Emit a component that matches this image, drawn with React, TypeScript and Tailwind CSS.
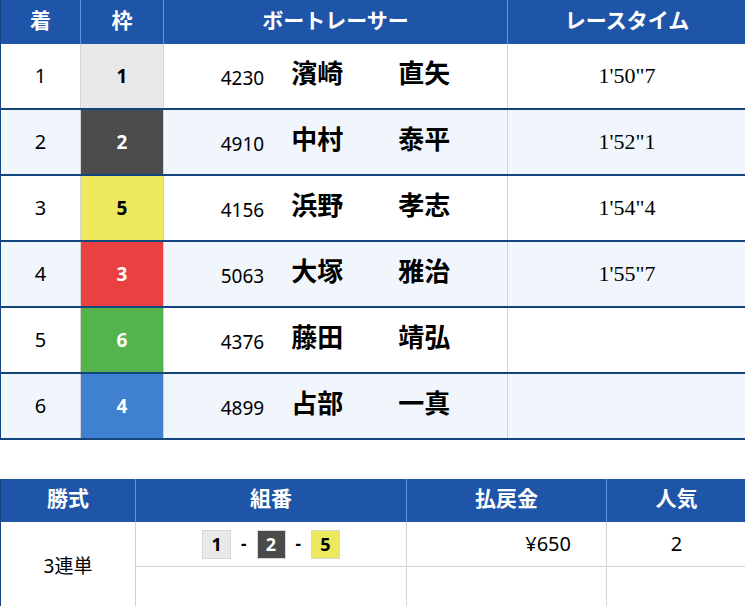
import React from "react";

const frameColors: Record<number, string> = {
  1: "bg-[#e9e9e9] text-black",
  2: "bg-[#4b4b4b] text-white",
  3: "bg-[#e94141] text-white",
  4: "bg-[#3f80d0] text-white",
  5: "bg-[#ece95f] text-black",
  6: "bg-[#54b44b] text-white",
};

const rows = [
  { rank: "1", frame: 1, reg: "4230", sur: "濱崎", given: "直矢", time: "1'50\"7" },
  { rank: "2", frame: 2, reg: "4910", sur: "中村", given: "泰平", time: "1'52\"1" },
  { rank: "3", frame: 5, reg: "4156", sur: "浜野", given: "孝志", time: "1'54\"4" },
  { rank: "4", frame: 3, reg: "5063", sur: "大塚", given: "雅治", time: "1'55\"7" },
  { rank: "5", frame: 6, reg: "4376", sur: "藤田", given: "靖弘", time: "" },
  { rank: "6", frame: 4, reg: "4899", sur: "占部", given: "一真", time: "" },
];

const jp = { fontFamily: '"Noto Sans", "Noto Sans CJK JP", sans-serif' };

const headerBg = "bg-[#1f55a8]";

function HeadCell({ children, last }: { children: React.ReactNode; last?: boolean }) {
  return (
    <div
      className={`flex items-center justify-center pb-[3px] text-white font-bold text-[21px] ${
        last ? "" : "border-r border-[#5f93dc]"
      }`}
    >
      {children}
    </div>
  );
}

function Badge({ n }: { n: number }) {
  return (
    <span
      className={`inline-flex w-[29px] h-[29px] items-center justify-center font-bold text-[18px] border border-[#d6d6d6] ${frameColors[n]}`}
    >
      {n}
    </span>
  );
}

export default function App() {
  return (
    <div className="w-[745px] h-[606px] overflow-hidden bg-white" style={jp}>
      {/* Result table */}
      <div className="border-l border-[#13467f]">
        <div className={`grid grid-cols-[80px_83px_344px_238px] h-[44px] ${headerBg}`}>
          <HeadCell>着</HeadCell>
          <HeadCell>枠</HeadCell>
          <HeadCell>ボートレーサー</HeadCell>
          <HeadCell last>レースタイム</HeadCell>
        </div>
        {rows.map((r, i) => (
          <div
            key={r.rank}
            className={`grid grid-cols-[80px_83px_344px_238px] h-[66px] border-b-2 border-[#13467f] ${
              i % 2 === 1 ? "bg-[#f1f6fd]" : "bg-white"
            }`}
          >
            <div className="flex items-center justify-center text-[20px] text-black border-r border-[#d3d3d3]">
              {r.rank}
            </div>
            <div
              className={`flex items-center justify-center font-bold text-[19px] border-r border-[#d3d3d3] ${frameColors[r.frame]}`}
            >
              {r.frame}
            </div>
            <div className="flex items-center justify-center border-r border-[#d3d3d3] text-black">
              <span className="text-[19px] mr-[27px] mt-[4px]">{r.reg}</span>
              <span className="text-[26px] font-bold mb-[5px]">{r.sur}</span>
              <span className="w-[55px]" />
              <span className="text-[26px] font-bold mb-[5px]">{r.given}</span>
            </div>
            <div
              className="flex items-center justify-center text-[22px] text-black pb-[2px]"
              style={{ fontFamily: '"Liberation Serif", serif' }}
            >
              {r.time}
            </div>
          </div>
        ))}
      </div>

      {/* Payout table */}
      <div className="mt-[39px] border-l border-[#13467f]">
        <div className={`grid grid-cols-[135px_271px_200px_139px] h-[43px] ${headerBg}`}>
          <HeadCell>勝式</HeadCell>
          <HeadCell>組番</HeadCell>
          <HeadCell>払戻金</HeadCell>
          <HeadCell last>人気</HeadCell>
        </div>
        <div className="grid grid-cols-[135px_610px]">
          <div className="flex items-center justify-center text-[19px] text-black border-r border-[#d3d3d3] h-[88px]">
            3連単
          </div>
          <div className="flex flex-col">
            <div className="grid grid-cols-[271px_200px_139px] h-[45px] border-b border-[#d3d3d3]">
              <div className="flex items-center justify-center gap-[10px] border-r border-[#d3d3d3] font-bold text-[17px]">
                <Badge n={1} />
                <span>-</span>
                <Badge n={2} />
                <span>-</span>
                <Badge n={5} />
              </div>
              <div className="flex items-center justify-end pr-[35px] text-[20px] border-r border-[#d3d3d3]">
                ¥650
              </div>
              <div className="flex items-center justify-center text-[20px]">2</div>
            </div>
            <div className="grid grid-cols-[271px_200px_139px] h-[43px]">
              <div className="border-r border-[#d3d3d3]" />
              <div className="border-r border-[#d3d3d3]" />
              <div />
            </div>
          </div>
        </div>
      </div>
    </div>
  );
}
